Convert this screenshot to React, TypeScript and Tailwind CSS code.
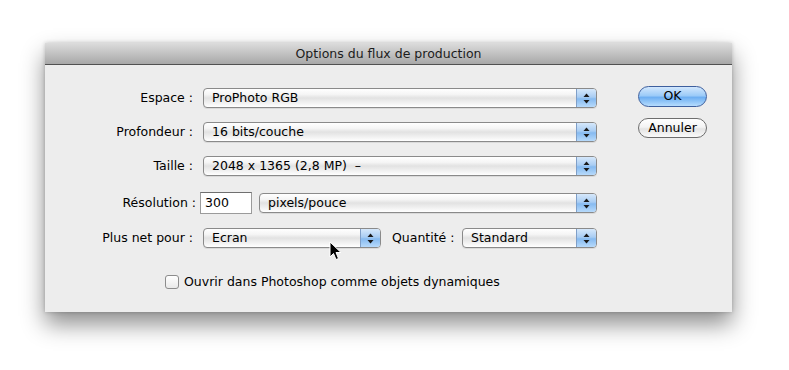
const Arrows = () => (
  <svg width="7" height="11" viewBox="0 0 7 11">
    <path d="M3.5 0.5 L6.5 4 L0.5 4 Z" fill="#1a1a1a" />
    <path d="M3.5 10.5 L6.5 7 L0.5 7 Z" fill="#1a1a1a" />
  </svg>
);

const Popup = ({ value, className }: { value: string; className: string }) => (
  <div
    className={`${className} flex h-[20px] items-stretch rounded-[4px] border border-[#8a8a8a] bg-[linear-gradient(#ffffff_0%,#f5f5f5_30%,#e2e2e2_50%,#f0f0f0_75%,#ffffff_100%)] shadow-[0_1px_0_rgba(0,0,0,0.08)]`}
  >
    <span className="flex-1 truncate whitespace-pre pl-[8px] leading-[18px] text-black">{value}</span>
    <span className="flex w-[20px] items-center justify-center rounded-r-[3px] border-l border-[#7f9fc8] bg-[linear-gradient(#d6e8fb_0%,#a9cdf3_45%,#86baf0_55%,#b7dafb_100%)]">
      <Arrows />
    </span>
  </div>
);

const Label = ({ children }: { children: string }) => (
  <div className="flex h-[20px] items-center justify-end pr-[10px] text-black">{children}</div>
);

export default function App() {
  return (
    <div className="h-[370px] w-[789px] bg-white pl-[45px] pt-[43px] font-['DejaVu_Sans',sans-serif] text-[12.5px]">
      <div className="relative flex h-[269px] w-[687px] flex-col bg-[#ededed] shadow-[0_12px_22px_rgba(0,0,0,0.45),0_0_4px_rgba(0,0,0,0.2)]">
        <div className="flex h-[22px] items-center justify-center border-b border-[#515151] bg-[linear-gradient(#dcdcdc,#a8a8a8)] pt-[2px] text-[12.5px] text-[#1c1c1c]">
          Options du flux de production
        </div>
        <div className="flex flex-1">
          <div className="flex flex-col pt-[23px]">
            <div className="grid grid-cols-[158px_auto] gap-y-[14px]">
              <Label>Espace :</Label>
              <Popup value="ProPhoto RGB" className="w-[394px]" />
              <Label>Profondeur :</Label>
              <Popup value="16 bits/couche" className="w-[394px]" />
              <Label>Taille :</Label>
              <Popup value="2048 x 1365 (2,8 MP)  –" className="w-[394px]" />
              <div className="mt-[2px] flex h-[22px] items-center justify-end pr-[7px] text-black">Résolution :</div>
              <div className="mt-[2px] flex h-[22px] items-center gap-[7px]">
                <div className="ml-[-3px] flex h-[22px] w-[52px] items-center border border-[#9b9b9b] border-t-[#6f6f6f] bg-white pl-[4px] text-black">
                  300
                </div>
                <Popup value="pixels/pouce" className="w-[338px]" />
              </div>
              <Label>Plus net pour :</Label>
              <div className="flex w-[394px] items-center">
                <Popup value="Ecran" className="w-[178px]" />
                <span className="ml-[11px] text-black">Quantité :</span>
                <Popup value="Standard" className="ml-auto w-[135px]" />
              </div>
            </div>
            <div className="mt-[25px] flex items-center pl-[120px] text-black">
              <span className="mr-[5px] h-[14px] w-[14px] rounded-[3px] border border-[#8c8c8c] bg-[linear-gradient(#ffffff,#e9e9e9)]" />
              Ouvrir dans Photoshop comme objets dynamiques
            </div>
          </div>
          <div className="ml-[41px] flex flex-col gap-[11px] pt-[21px]">
            <button className="flex h-[21px] w-[69px] items-center justify-center rounded-full border border-[#3d5f9e] bg-[linear-gradient(#d2e7fd_0%,#9ccbf8_45%,#6eaff2_55%,#b6dcfd_100%)] text-black">
              OK
            </button>
            <button className="flex h-[20px] w-[69px] items-center justify-center rounded-full border border-[#6d6d6d] bg-[linear-gradient(#ffffff_0%,#f4f4f4_45%,#e4e4e4_55%,#fafafa_100%)] text-black">
              Annuler
            </button>
          </div>
        </div>
        <svg className="absolute left-[284px] top-[198px]" width="13" height="20" viewBox="0 0 13 20">
          <path d="M1 1 L1 16 L4.5 12.5 L7 18.5 L9.5 17.5 L7 11.5 L12 11.5 Z" fill="#000" stroke="#fff" strokeWidth="1" strokeLinejoin="round" />
        </svg>
      </div>
    </div>
  );
}
